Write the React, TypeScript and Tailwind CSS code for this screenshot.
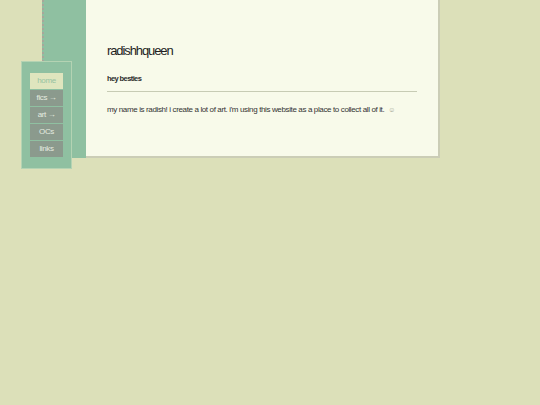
import * as React from "react";

const links = [
    {label: "home", active: true},
    {label: "fics →"},
    {label: "art →"},
    {label: "OCs"},
    {label: "links"},
];

export default function App() {
    return (
        <div className="relative min-h-[405px] w-full bg-[#dce0b9] text-[#2a2a2a]"
             style={{fontFamily: '"Liberation Sans", Arial, sans-serif'}}>
            <div className="flex pl-[42px]">
                <div className="w-[44px] h-[158px] bg-[#8fc0a1] border-l-2 border-dotted border-[#a7a79a]"/>
                <div className="w-[354px] h-[158px] bg-[#f8faea] border-r-2 border-b-2 border-[#cbcdb6] px-[21px] pt-[42px]">
                    <h1 className="text-[13px] leading-[18px] font-normal tracking-[-1.1px] text-[#1e1e1e] whitespace-nowrap">radishhqueen</h1>
                    <h2 className="mt-[13px] text-[7.5px] leading-[12px] font-bold tracking-[-0.6px] whitespace-nowrap">hey besties</h2>
                    <hr className="mt-[6px] border-t-[1.5px] border-[#c7cbb4]"/>
                    <p className="mt-[12px] text-[8px] leading-[12px] tracking-[-0.37px] text-[#333] whitespace-nowrap">
                        my name is radish! i create a lot of art. i'm using this website as a place to collect all of it. <span className="ml-[2px] text-[#9a9a8a] text-[7px]">☺</span>
                    </p>
                </div>
            </div>

            <nav className="absolute left-[21px] top-[61px] w-[51px] h-[108px] bg-[#8fc0a1] border border-[#b4d3b3] pt-[11px] px-[8px]">
                <ul className="flex flex-col gap-[1px]">
                    {links.map((l) => (
                        <li key={l.label}
                            className={`h-[16px] flex items-center justify-center text-[8px] tracking-[-0.4px] ${l.active ? "bg-[#dfe5be] text-[#97c3a2]" : "bg-[#8b9a8d] text-[#e6ece0]"}`}>
                            {l.label}
                        </li>
                    ))}
                </ul>
            </nav>
        </div>
    );
}
